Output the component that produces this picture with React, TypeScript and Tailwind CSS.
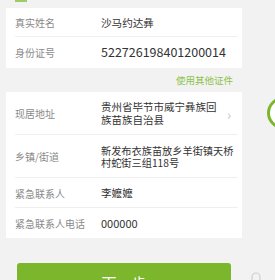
const font = { fontFamily: '"Noto Sans CJK SC", "Noto Sans", sans-serif' };

function Row({
  label,
  children,
  h,
  divider = true,
}: {
  label: string;
  children: React.ReactNode;
  h: string;
  divider?: boolean;
}) {
  return (
    <div className={`relative flex items-center ${h}`}>
      <div className="w-[95px] shrink-0 pl-[9px] text-[10px] text-[#8a8a8a]">{label}</div>
      {children}
      {divider && <div className="absolute bottom-0 left-[9px] right-[4px] h-px bg-[#efefef]" />}
    </div>
  );
}

export default function App() {
  return (
    <div className="relative h-[280px] w-[275px] overflow-hidden bg-[#f2f2f2]" style={font}>
      {/* cut-off green mark at top */}
      <div className="absolute left-[15px] top-0 h-[2px] w-[12px] bg-[#9ccc65]" />

      <div className="pt-[8px]">
        <div className="ml-[6px] w-[236px] bg-white">
          <Row label="真实姓名" h="h-[29px]">
            <span className="text-[10.6px] text-[#333]">沙马约达彝</span>
          </Row>
          <Row label="身份证号" h="h-[31px]" divider={false}>
            <span className="text-[12.5px] text-[#333]">522726198401200014</span>
          </Row>
        </div>

        <div className="flex h-[24px] w-[242px] items-center justify-end pr-[9px] text-[9.5px] text-[#8bc34a]">
          使用其他证件
        </div>

        <div className="ml-[6px] w-[236px] bg-white">
          <Row label="现居地址" h="h-[43px]">
            <span className="w-[120px] text-[10.5px] leading-[12.5px] text-[#333]">
              贵州省毕节市威宁彝族回族苗族自治县
            </span>
            <span className="ml-[6px] text-[14px] leading-none text-[#c4c4c4]">›</span>
          </Row>
          <Row label="乡镇/街道" h="h-[43px]">
            <span className="w-[138px] text-[10.2px] leading-[12px] text-[#333]">
              新发布衣族苗放乡羊街镇天桥村蛇街三组118号
            </span>
          </Row>
          <Row label="紧急联系人" h="h-[30px]">
            <span className="text-[10.6px] text-[#333]">李嬷嬷</span>
          </Row>
          <Row label="紧急联系人电话" h="h-[30px]" divider={false}>
            <span className="text-[11px] text-[#333]">000000</span>
          </Row>
        </div>

        <div className="ml-[17px] mt-[25px] flex h-[40px] w-[214px] items-center justify-center rounded-[3px] bg-[#7cb62c] text-[15px] text-white">
          下一步
        </div>
      </div>

      {/* floating ring at right edge */}
      <div className="absolute left-[267px] top-[97px] h-[32px] w-[32px] rounded-full border-[3px] border-[#7cb62c] bg-white" />

      {/* faint icon at bottom right */}
      <svg className="absolute left-[249px] top-[271px]" width="14" height="12" viewBox="0 0 14 12">
        <path d="M3 12V6a4 4 0 0 1 8 0v6" fill="none" stroke="#cfcfcf" strokeWidth="1.2" />
      </svg>
    </div>
  );
}
